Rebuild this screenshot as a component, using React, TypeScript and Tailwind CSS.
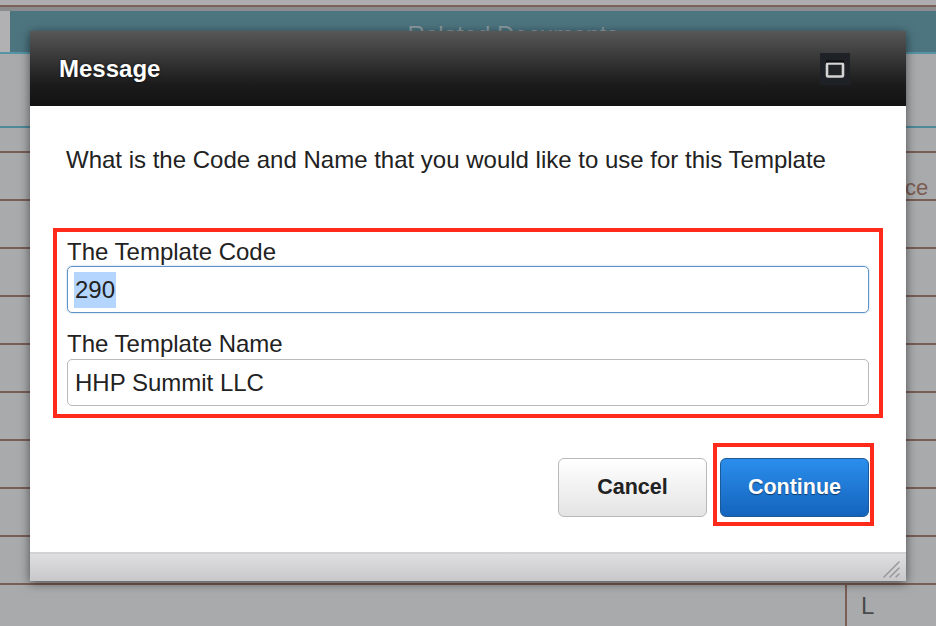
import React from "react";

const font = { fontFamily: '"Liberation Sans", Arial, Helvetica, sans-serif' };

function BackgroundRow({ children }: { children?: React.ReactNode }) {
  return (
    <div className="relative h-[48px] shrink-0 border-t-2 border-[#7b5e56]">
      {children}
    </div>
  );
}

function MaximizeIcon() {
  return (
    <svg width="20" height="20" viewBox="0 0 20 20">
      <rect x="2" y="4.5" width="16" height="13" rx="1" fill="#202326" stroke="#d4d4d4" strokeWidth="2.6" />
      <rect x="1" y="1.5" width="18" height="2" fill="#0b0c0d" />
    </svg>
  );
}

function ResizeGrip() {
  return (
    <svg width="20" height="20" viewBox="0 0 20 20">
      <path d="M2 18 L17 3 M8 18 L17 9 M14 18 L17 15" stroke="#9a9a9c" strokeWidth="1.6" strokeLinecap="round" />
    </svg>
  );
}

export default function App() {
  return (
    <div className="relative h-[626px] w-[936px] overflow-hidden bg-[#a9aaac]" style={font}>
      {/* page behind the modal */}
      <div className="flex flex-col">
        <div className="h-[5px] bg-[#adadaf]" />
        <div className="h-[2px] bg-[#7b6159]" />
        <div className="h-[4px] bg-[#8b8c8d]" />
        <div className="flex h-[41px] bg-[#4d7580]">
          <div className="w-[10px] bg-[#b1b1b3]" />
          <div className="flex-1 pl-[80px] pt-[10px] text-center text-[24px] leading-[28px] text-[#8c9ca1]">
            Related Documents
          </div>
        </div>
        <div className="h-[2px] bg-[#5494a5]" />
        <div className="h-[72px]" />
        <div className="h-[2px] bg-[#4f8a9a]" />
        <div className="h-[23px]" />
        <BackgroundRow>
          <span className="absolute left-[905px] top-[24px] text-[22px] leading-[22px] text-[#7b5b52]">ce</span>
        </BackgroundRow>
        <BackgroundRow />
        <BackgroundRow />
        <BackgroundRow />
        <BackgroundRow />
        <BackgroundRow />
        <BackgroundRow />
        <BackgroundRow />
        <BackgroundRow />
        <div className="relative h-[48px] border-t-2 border-[#7b5e56]">
          <div className="absolute left-[845px] top-0 h-full w-[2px] bg-[#7b5e56]" />
          <span className="absolute left-[861px] top-[8px] text-[24px] leading-[26px] text-[#4a4a4a]">L</span>
        </div>
      </div>

      {/* modal */}
      <div className="absolute left-[30px] top-[31px] flex h-[550px] w-[876px] flex-col shadow-[0_2px_10px_rgba(0,0,0,0.55)]">
        <div className="flex h-[75px] items-center justify-between bg-gradient-to-b from-[#585858] via-[#1c1c1c] via-[70%] to-[#121212] pl-[29px] pr-[56px]">
          <span className="text-[24px] font-bold leading-[28px] text-white [text-shadow:0_0_2px_rgba(0,0,0,0.9)]">
            Message
          </span>
          <button className="flex h-[32px] w-[30px] items-center justify-center bg-[#1e2125]">
            <MaximizeIcon />
          </button>
        </div>

        <div className="flex flex-1 flex-col bg-white px-[23px] pt-[41px]">
          <p className="pl-[13px] text-[24px] leading-[26px] text-[#222]">
            What is the Code and Name that you would like to use for this Template
          </p>

          <div className="mt-[55px] border-4 border-[#ff2a1a] px-[10px] pb-[8px] pt-[7px]">
            <div className="h-[26px] text-[24px] leading-[26px] text-[#222]">The Template Code</div>
            <div className="mt-[1px] flex h-[47px] items-center rounded-[5px] border border-[#5f93c8] px-[6px] text-[24px] text-[#222] shadow-[0_0_2px_rgba(95,147,200,0.6)]">
              <span className="bg-[#b4d5fe] px-[1px]">290</span>
            </div>
            <div className="mt-[18px] h-[26px] text-[24px] leading-[26px] text-[#222]">The Template Name</div>
            <div className="mt-[2px] flex h-[47px] items-center rounded-[5px] border border-[#b9b9b9] px-[7px] text-[24px] text-[#222]">
              HHP Summit LLC
            </div>
          </div>

          <div className="mt-[40px] flex justify-end gap-[13px] pr-[14px]">
            <button className="h-[59px] w-[149px] rounded-[6px] border border-[#b9b9b9] bg-gradient-to-b from-white to-[#e4e4e4] text-[21.5px] font-bold text-[#222]">
              Cancel
            </button>
            <div className="relative">
              <button className="h-[59px] w-[149px] rounded-[6px] border border-[#1c5a96] bg-gradient-to-b from-[#2b8eec] to-[#1464bd] text-[21.5px] font-bold text-white [text-shadow:0_1px_1px_rgba(0,0,0,0.5)]">
                Continue
              </button>
              <div className="pointer-events-none absolute -left-[7px] -right-[5px] -top-[15px] -bottom-[9px] border-4 border-[#ff2a1a]" />
            </div>
          </div>
        </div>

        <div className="flex h-[29px] items-end justify-end border-t-2 border-[#d2d2d4] bg-gradient-to-b from-[#dfdfe1] to-[#c8c8ca] pb-[2px] pr-[4px]">
          <ResizeGrip />
        </div>
      </div>
    </div>
  );
}
